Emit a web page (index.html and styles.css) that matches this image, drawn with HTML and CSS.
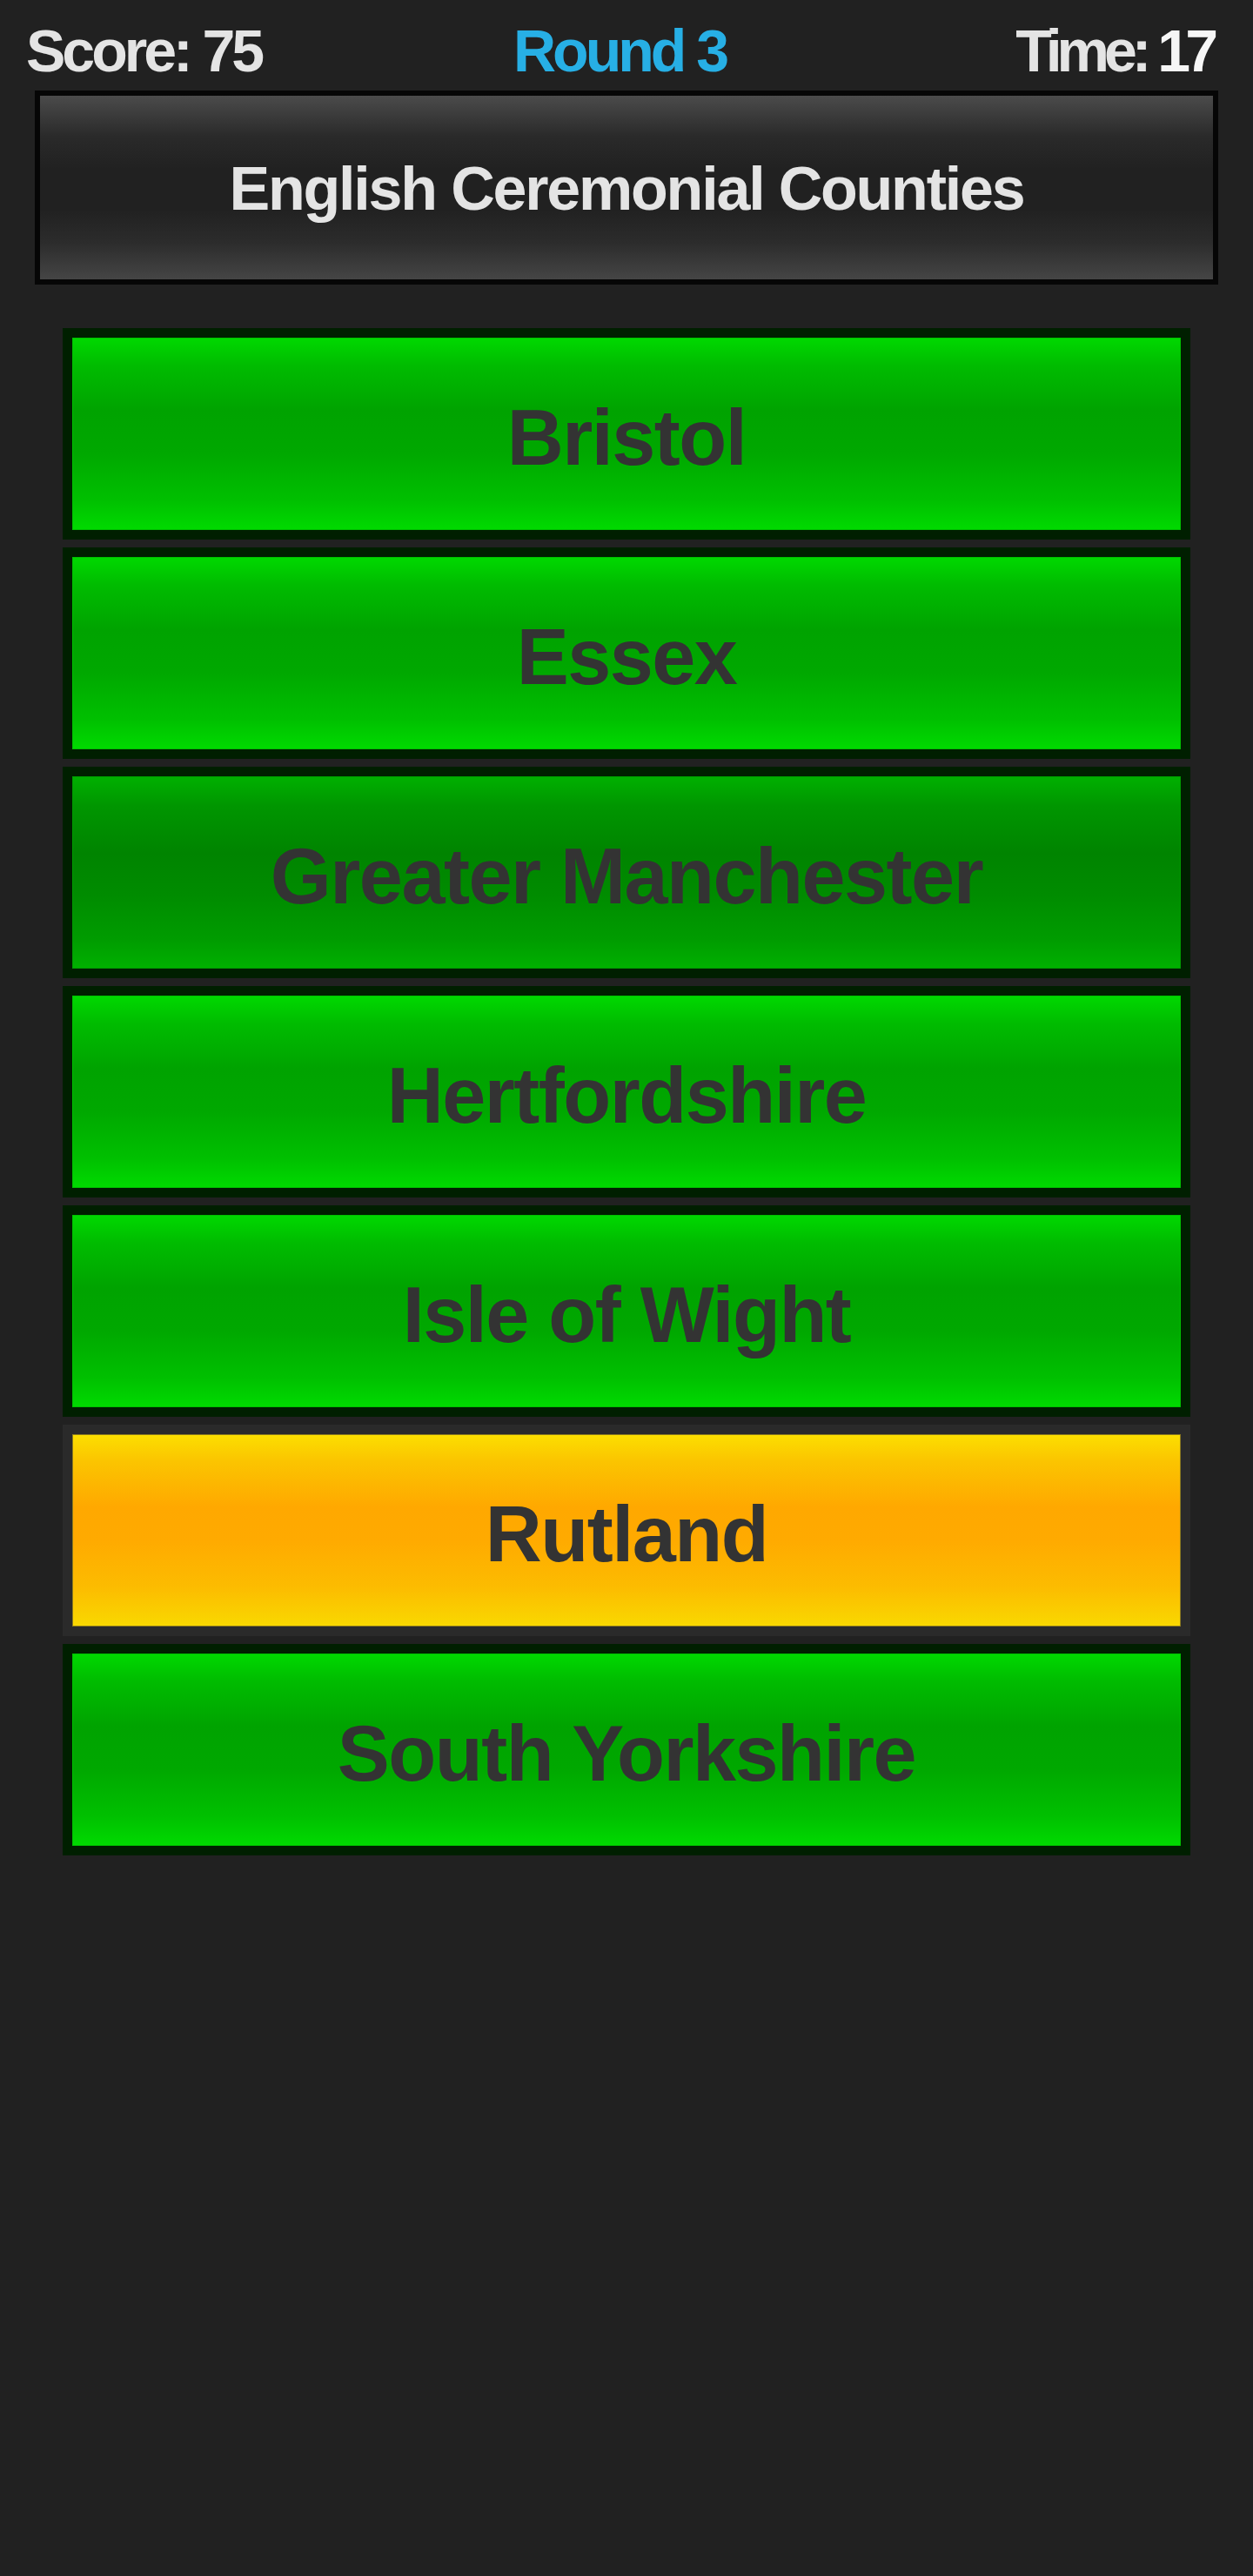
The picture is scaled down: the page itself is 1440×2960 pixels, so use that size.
FILE: index.html
```html
<!DOCTYPE html>
<html lang="en">
<head>
<meta charset="utf-8">
<title>English Ceremonial Counties</title>
<link rel="stylesheet" href="styles.css">
</head>
<body>
<div class="app">
  <header class="status">
    <div class="score">Score: 75</div>
    <div class="round">Round 3</div>
    <div class="time">Time: <span class="time-value">17</span></div>
  </header>
  <div class="title-box">
    <h1 class="title">English Ceremonial Counties</h1>
  </div>
  <ul class="answers">
    <li class="answer"><span class="answer-inner">Bristol</span></li>
    <li class="answer"><span class="answer-inner">Essex</span></li>
    <li class="answer answer-dark"><span class="answer-inner">Greater Manchester</span></li>
    <li class="answer"><span class="answer-inner">Hertfordshire</span></li>
    <li class="answer"><span class="answer-inner">Isle of Wight</span></li>
    <li class="answer answer-gold"><span class="answer-inner">Rutland</span></li>
    <li class="answer"><span class="answer-inner">South Yorkshire</span></li>
  </ul>
</div>
</body>
</html>
```

FILE: styles.css
```css
html, body {
  margin: 0;
  padding: 0;
  background: #212121;
}

body {
  font-family: "Liberation Sans", Arial, sans-serif;
  font-weight: bold;
  min-height: 2960px;
}

.app {
  display: flex;
  flex-direction: column;
  align-items: center;
}

.status {
  box-sizing: border-box;
  width: 100%;
  display: grid;
  grid-template-columns: 1fr auto 1fr;
  align-items: center;
  padding: 24px 46px 0 30px;
  height: 92px;
  font-size: 68px;
  line-height: 68px;
  letter-spacing: -4px;
  color: #e4e4e4;
}

.score {
  justify-self: start;
}

.round {
  justify-self: center;
  color: #27afe5;
}

.time {
  justify-self: end;
  letter-spacing: -6px;
}

.time-value {
  color: #f6f6f6;
}

.title-box {
  box-sizing: border-box;
  margin-top: 12px;
  width: 1360px;
  height: 223px;
  border: 6px solid #060606;
  background: linear-gradient(#4b4b4b 0%, #2a2a2a 22%, #212121 40%, #212121 62%, #2c2c2c 80%, #454545 100%);
  display: flex;
  align-items: center;
  justify-content: center;
  padding-top: 3px;
}

.title {
  margin: 0;
  font-size: 70px;
  line-height: 70px;
  letter-spacing: -2.2px;
  color: #e4e4e4;
  font-weight: bold;
}

.answers {
  list-style: none;
  margin: 50px 0 0;
  padding: 0;
  width: 1296px;
  display: flex;
  flex-direction: column;
  gap: 9px;
}

.answer {
  box-sizing: border-box;
  height: 243px;
  border: 11px solid #001f00;
  display: flex;
}

.answer-inner {
  flex: 1;
  box-sizing: border-box;
  display: flex;
  align-items: center;
  justify-content: center;
  padding-top: 8px;
  border: 1px solid #00c000;
  background: linear-gradient(#00d800 0%, #00bc00 14%, #00a300 38%, #00a800 60%, #00c000 85%, #00da00 100%);
  color: #333333;
  font-size: 90px;
  line-height: 90px;
  letter-spacing: -1.5px;
}

.answer-dark .answer-inner {
  border-color: #009a00;
  background: linear-gradient(#00b000 0%, #009600 15%, #008400 40%, #008c00 62%, #009c00 85%, #00b000 100%);
}

.answer-gold {
  border-color: #2a2a2a;
}

.answer-gold .answer-inner {
  border-color: #8c7a1e;
  background: linear-gradient(#fcde00 0%, #fbc400 14%, #ffa800 38%, #ffaa00 55%, #fcbc00 80%, #f9d800 100%);
}
```
